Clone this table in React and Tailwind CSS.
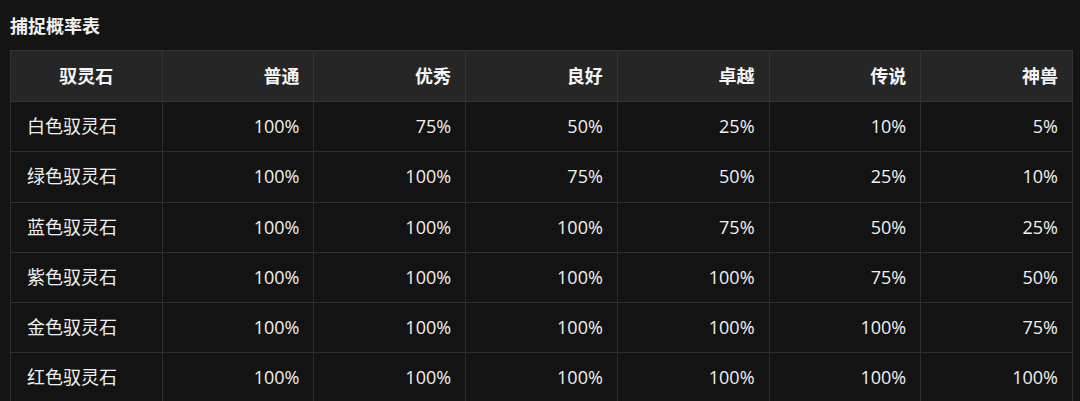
const headers = ["驭灵石", "普通", "优秀", "良好", "卓越", "传说", "神兽"];

const rows = [
  ["白色驭灵石", "100%", "75%", "50%", "25%", "10%", "5%"],
  ["绿色驭灵石", "100%", "100%", "75%", "50%", "25%", "10%"],
  ["蓝色驭灵石", "100%", "100%", "100%", "75%", "50%", "25%"],
  ["紫色驭灵石", "100%", "100%", "100%", "100%", "75%", "50%"],
  ["金色驭灵石", "100%", "100%", "100%", "100%", "100%", "75%"],
  ["红色驭灵石", "100%", "100%", "100%", "100%", "100%", "100%"],
];

const App = () => {
  return (
    <div className="min-h-screen bg-[#141414] px-[10px] font-['Open_Sans','Noto_Sans_CJK_SC',sans-serif] text-[#f0f0f0]">
      <h2 className="flex h-[50px] items-center pt-[2px] text-[18px] font-bold text-[#f2f2f2]">
        捕捉概率表
      </h2>
      <table className="w-[1063px] table-fixed border-collapse">
        <thead>
          <tr className="bg-[#262626]">
            {headers.map((h, i) => (
              <th
                key={h}
                className={`h-[51px] border border-[#333333] px-[14px] text-[18px] font-bold text-[#f5f5f5] ${
                  i === 0 ? "text-center" : "text-right"
                }`}
              >
                {h}
              </th>
            ))}
          </tr>
        </thead>
        <tbody>
          {rows.map((r) => (
            <tr key={r[0]} className="bg-[#131313]">
              {r.map((c, i) => (
                <td
                  key={i}
                  className={`h-[50.25px] border border-[#2e2e2e] px-[14px] text-[18px] ${
                    i === 0 ? "pl-[16px] text-left" : "text-right"
                  }`}
                >
                  {c}
                </td>
              ))}
            </tr>
          ))}
        </tbody>
      </table>
    </div>
  );
};

export default App;
